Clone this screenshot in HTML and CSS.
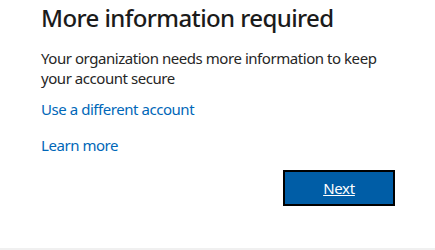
FILE: index.html
```html
<!DOCTYPE html>
<html lang="en">
<head>
    <meta charset="UTF-8">
    <meta name="viewport" content="width=device-width, initial-scale=1.0">
    <title>More information required</title>
    <link rel="stylesheet" href="styles.css">
</head>
<body>
    <div class="page">
        <div class="content">
            <div class="title">More information required</div>
            <div class="desc">Your organization needs more information to keep your account secure</div>
            <div class="link-row"><a href="#" class="link">Use a different account</a></div>
            <div class="link-row learn"><a href="#" class="link">Learn more</a></div>
            <div class="actions">
                <button class="next">Next</button>
            </div>
        </div>
        <div class="footer"></div>
    </div>
</body>
</html>
```
FILE: styles.css
```css
body {
    margin: 0;
    font-family: "Noto Sans", "Open Sans", sans-serif;
    color: #1b1b1b;
    background: #fff;
}

.page {
    display: flex;
    flex-direction: column;
    height: 100vh;
}

.content {
    flex: 1;
    padding: 4px 40px 0 41px;
}

.title {
    font-size: 24px;
    line-height: 28px;
    font-weight: 500;
    letter-spacing: -0.6px;
}

.desc {
    margin-top: 16px;
    font-size: 15px;
    line-height: 20px;
    letter-spacing: -0.45px;
    width: 345px;
    color: #262626;
}

.link-row {
    margin-top: 11px;
    font-size: 15px;
    line-height: 20px;
    letter-spacing: -0.45px;
}

.link-row.learn {
    margin-top: 16px;
}

.link {
    color: #0067b8;
    text-decoration: none;
}

.actions {
    display: flex;
    justify-content: flex-end;
    margin-top: 15px;
}

.next {
    width: 112px;
    height: 36px;
    background: #005da6;
    border: 2px solid #000;
    color: #fff;
    font-family: inherit;
    font-size: 15px;
    letter-spacing: -0.3px;
    text-decoration: underline;
    cursor: pointer;
    padding: 0;
}

.footer {
    height: 2px;
    background: #f0f0f0;
}
```
